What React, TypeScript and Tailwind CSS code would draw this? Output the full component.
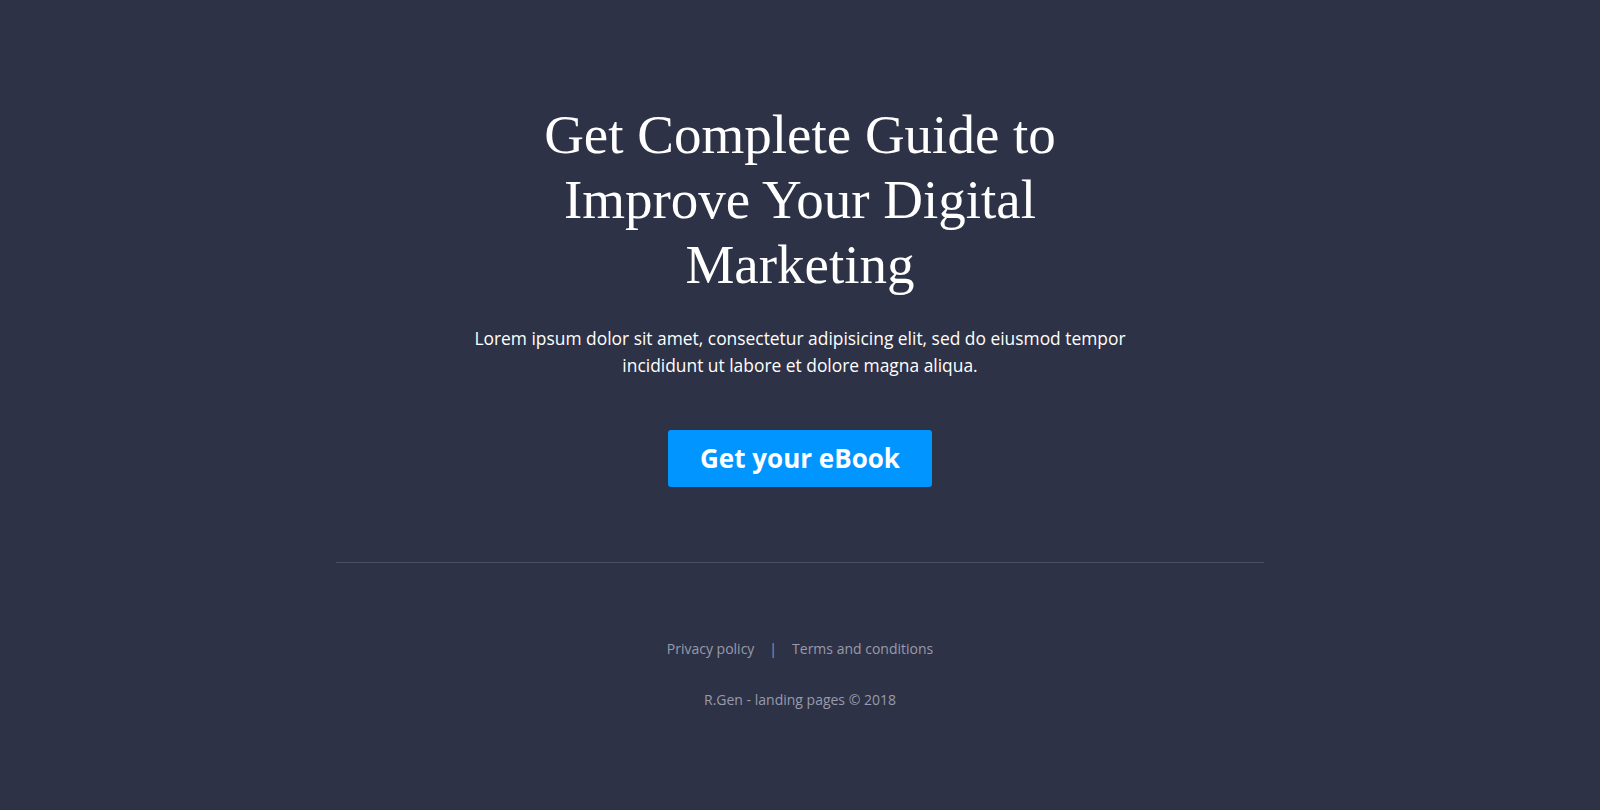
export default function App() {
  return (
    <div className="min-h-[810px] w-full bg-[#2e3246] flex flex-col items-center" style={{ fontFamily: '"Open Sans", "Liberation Sans", sans-serif' }}>
      <section className="w-[928px] flex flex-col items-center pt-[102px]">
        <h1 className="text-center text-white text-[55px] leading-[65px] font-normal" style={{ fontFamily: '"Liberation Serif", "DejaVu Serif", serif' }}>
          Get Complete Guide to
          <br />
          Improve Your Digital
          <br />
          Marketing
        </h1>
        <p className="mt-[28px] text-center text-white text-[17.4px] leading-[27px] w-[680px]">
          Lorem ipsum dolor sit amet, consectetur adipisicing elit, sed do eiusmod tempor incididunt ut labore et dolore magna aliqua.
        </p>
        <button type="button" className="mt-[51px] w-[264px] h-[57px] rounded-[3px] bg-[#0095ff] text-white text-[26px] font-bold">
          Get your eBook
        </button>
      </section>
      <footer className="w-[928px] mt-[75px] border-t border-[#4a4f63] flex flex-col items-center">
        <div className="mt-[75px] flex items-center gap-[15px] text-[14px] text-[#989bab]">
          <span>Privacy policy</span>
          <span>|</span>
          <span>Terms and conditions</span>
        </div>
        <div className="mt-[30px] text-[14px] text-[#989bab]">R.Gen - landing pages © 2018</div>
      </footer>
    </div>
  )
}
